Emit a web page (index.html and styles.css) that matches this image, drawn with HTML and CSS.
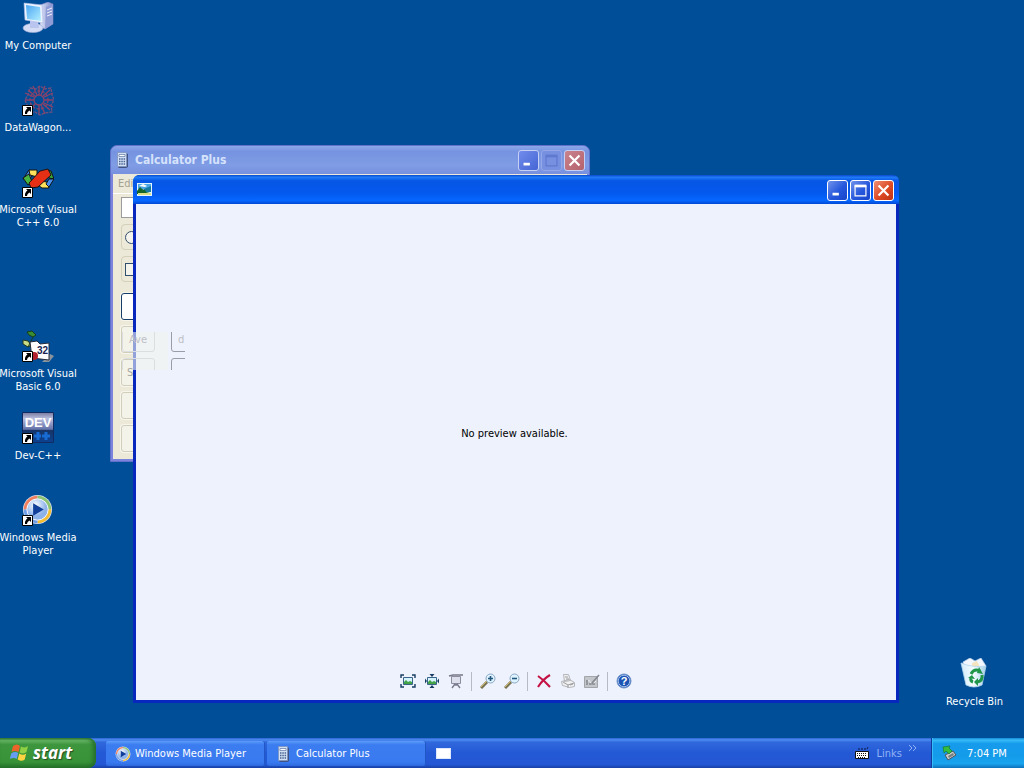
FILE: index.html
```html
<!DOCTYPE html>
<html lang="en">
<head>
<meta charset="utf-8">
<title>Desktop</title>
<link rel="stylesheet" href="styles.css">
</head>
<body>
<svg class="defs" aria-hidden="true">
  <defs>
    <linearGradient id="scr" x1="0" y1="0" x2="1" y2="1"><stop offset="0" stop-color="#4ba6f4"/><stop offset="1" stop-color="#b4f0ff"/></linearGradient>
    <linearGradient id="tower" x1="0" y1="0" x2="1" y2="0"><stop offset="0" stop-color="#dfe4fa"/><stop offset="1" stop-color="#7d8ac8"/></linearGradient>
    <linearGradient id="dev" x1="0" y1="0" x2="0" y2="1"><stop offset="0" stop-color="#77799f"/><stop offset=".2" stop-color="#b9bddd"/><stop offset=".56" stop-color="#6472aa"/><stop offset=".6" stop-color="#173567"/><stop offset="1" stop-color="#0b4292"/></linearGradient>
    <radialGradient id="disc" cx=".4" cy=".3"><stop offset="0" stop-color="#fff"/><stop offset="1" stop-color="#8db2ea"/></radialGradient>
    <linearGradient id="bin" x1="0" y1="0" x2="1" y2="0"><stop offset="0" stop-color="#d4ecfa"/><stop offset=".5" stop-color="#f4fbff"/><stop offset="1" stop-color="#a5cfe9"/></linearGradient>
    <symbol id="shortcut" viewBox="0 0 11 11"><path fill="#fff" stroke="#000" d="M.5.5h10v10H.5z"/><path d="M4 2h5v5L7.500 5.500Q5 6.500 5 9H3Q2.500 5.500 5.500 3.500z"/></symbol>
    <symbol id="calc" viewBox="0 0 16 16"><path fill="#40527f" d="M11 1l2 1v13l-2 1H4l-1-1z"/><path fill="#d3e1f6" stroke="#7f93bb" stroke-width=".8" d="M2.500.5h9v14h-9z"/><path fill="#fff" stroke="#5d75a4" stroke-width=".7" d="M4 2.500h6v2H4z"/><path stroke="#486391" stroke-width="1.400" stroke-dasharray="1.500 .8" d="M4 7h6.500M4 9.500h6.500M4 12h6.500"/></symbol>
    <symbol id="wmp" viewBox="0 0 32 32"><circle cx="16" cy="16" r="15" fill="#d9ddea"/><g fill="none" stroke-width="3.500"><path stroke="#f08060" d="M3.500 16A12.500 12.500 0 0 1 16 3.500"/><path stroke="#8bc572" d="M16 3.500A12.500 12.500 0 0 1 28.500 16"/><path stroke="#f4bd32" d="M28.500 16A12.500 12.500 0 0 1 16 28.500"/><path stroke="#709ee6" d="M16 28.500A12.500 12.500 0 0 1 3.500 16"/></g><circle cx="16" cy="16" r="11" fill="url(#disc)" stroke="#f7f9ff"/><path fill="#123f99" d="M11.500 9.500v13l11-6.500z"/></symbol>
    <symbol id="min" viewBox="0 0 21 21"><path fill="#fff" d="M5 13h7v3H5z"/></symbol>
    <symbol id="max" viewBox="0 0 21 21"><path fill="none" stroke="currentColor" stroke-width="1.300" d="M4.500 5.500h12v11h-12z"/><path fill="currentColor" d="M4 4h13v3H4z"/></symbol>
    <symbol id="close" viewBox="0 0 21 21"><path stroke="#fff" stroke-width="2.400" d="M5 5l11 11M16 5L5 16"/></symbol>
    <symbol id="photo" viewBox="0 0 10 8"><path fill="#d5f2ff" stroke="#3a6488" d="M.5.500h9v7h-9z"/><path fill="#45a347" d="M1 7V5l2-2 2 2 2-1 2 1v2z"/></symbol>
  </defs>
</svg>

<div class="screen">
  <main class="desktop">
    <nav class="icons" aria-label="Desktop shortcuts">
      <a class="shortcut" href="#computer">
        <svg viewBox="0 0 32 32"><path fill="url(#tower)" stroke="#7783c0" stroke-width=".6" d="M18 3l8-3 5 2v20l-8 5-5-2z"/><path fill="#8f9bd4" d="M24 5l7-3v20l-8 5z"/><path stroke="#eef1ff" d="M25 8l5-2M25 11l5-2M25 14l5-2"/><ellipse cx="11" cy="26" rx="10" ry="4.500" fill="#d4dcf5" stroke="#a1acd9" stroke-width=".6"/><path fill="#b9c5ee" d="M8 19h8l1 7H8z"/><path fill="#edf3ff" stroke="#aebbe4" stroke-width=".6" d="M2 1l18 2 1 18L3 18z"/><path fill="url(#scr)" d="M4 3l14 2 1 14-14-2z"/></svg>
        <span>My Computer</span></a>
      <a class="shortcut" href="#datawagon">
        <svg viewBox="0 0 32 32"><g fill="none" stroke="#8c4268" stroke-width="1.300"><circle cx="17" cy="16" r="5"/><circle cx="17" cy="16" r="9" stroke-dasharray="3 1.500"/><path stroke="#70507e" stroke-dasharray="3 1" d="M8 4l6 1 4-3 5 3 6-1 1 7 2 5-3 5 1 7-7 1-5 2-5-3-7 1-1-8-2-5 3-5z"/><path d="M17 2v9M17 21v9M3 16h9M22 16h9M6 6l7 6M28 6l-7 6M28 26l-7-6M7 27l6-7M3 9l9 4M31 9l-9 4M31 23l-9-4M11 2l4 9M23 2l-4 9M23 30l-4-9"/></g><use href="#shortcut" x="0" y="21" width="11" height="11"/></svg>
        <span>DataWagon...</span></a>
      <a class="shortcut" href="#vc">
        <svg viewBox="0 0 32 32"><g stroke="#151515"><path fill="#488bea" d="M7 4l6 2-6 8-6-1z"/><path fill="#ffe15b" d="M7 4h8v7l-7-2z"/><path fill="#49b541" d="M1 12l6-4 3 8-4 3z"/><path fill="#ffe15b" d="M18 15l7 1 2 6h-7l-4-3z"/><path fill="#39a63c" d="M24 4l5 1 3 8-5-1z"/><path fill="#478ded" d="M27 13h5l-5 8-3-3z"/><path fill="#e63015" d="M7 17L18 5l8-2 3 6-13 12-7 1z"/></g><use href="#shortcut" x="0" y="21" width="11" height="11"/></svg>
        <span>Microsoft Visual<br>C++ 6.0</span></a>
      <a class="shortcut after-gap" href="#vb">
        <svg viewBox="0 0 32 32"><path fill="#3b8b32" stroke="#123e1c" d="M5 2l5-1 4 4-3 2-4-2z"/><path fill="#c9db87" stroke="#253b20" d="M1 10l5 1 3 4-3 2-5-3z"/><path stroke="#13411b" d="M11 7l-5 10"/><path fill="#89949d" d="M28 24l4 2-5 6h-7z"/><path fill="#fff" stroke="#252b3a" d="M8 12l7-1 3 3 9-1v17l-17-2z"/><circle cx="12" cy="26" r="4" fill="#b2212d"/><text class="vb-mark" x="15" y="24">32</text><use href="#shortcut" x="0" y="21" width="11" height="11"/></svg>
        <span>Microsoft Visual<br>Basic 6.0</span></a>
      <a class="shortcut" href="#devcpp">
        <svg viewBox="0 0 32 32"><path fill="url(#dev)" stroke="#112b62" d="M.5.500h31v30H.5z"/><text class="dev-mark" x="16" y="15" text-anchor="middle">DEV</text><path stroke="#176bd3" stroke-width="3" d="M12 24h7M20 24h8M16 20v8M24 20v8"/><use href="#shortcut" x="0" y="21" width="11" height="11"/></svg>
        <span>Dev-C++</span></a>
      <a class="shortcut" href="#wmplayer">
        <svg viewBox="0 0 32 32"><use href="#wmp" width="31" height="31"/><use href="#shortcut" x="0" y="21" width="11" height="11"/></svg>
        <span>Windows Media<br>Player</span></a>
    </nav>

    <a class="shortcut recycle" href="#recycle">
      <svg viewBox="0 0 32 32"><path fill="#f2f7ff" stroke="#bfd2e8" stroke-width=".7" d="M5 4l7-4 5 3 6-3 5 8-6 5H7z"/><path fill="#f4e4bf" d="M14 5l5-2 3 6h-8z"/><path fill="url(#bin)" stroke="#b3d5ec" stroke-width=".8" d="M3 5q12 5 25 3l-4 19q-8 4-16 0z"/><g fill="none" stroke="#20964a" stroke-width="3"><path d="M13 16q3-6 9-3M24 17q1 6-5 7M15 24q-3-1-2-4"/></g><path fill="#20964a" d="M21 9l4 7-6-1zM20 20v8l-4-4zM10 20l4-3 3 4z"/></svg>
      <span>Recycle Bin</span></a>

    <section class="window calculator" aria-label="Calculator Plus">
      <header class="titlebar">
        <svg class="title-icon" viewBox="0 0 16 16"><use href="#calc"/></svg>
        <h1>Calculator Plus</h1>
        <div class="controls">
          <button class="ctl" aria-label="Minimize calculator"><svg viewBox="0 0 21 21"><use href="#min"/></svg></button>
          <button class="ctl unavailable" aria-label="Maximize calculator" disabled><svg viewBox="0 0 21 21"><use href="#max"/></svg></button>
          <button class="ctl red" aria-label="Close calculator"><svg viewBox="0 0 21 21"><use href="#close"/></svg></button>
        </div>
      </header>
      <div class="calc-body">
        <button class="menu-item">Edit</button>
        <div class="keypad">
          <input class="display" aria-label="Result">
          <label class="option"><input type="radio" aria-label="Hex"></label>
          <label class="option"><input type="checkbox" aria-label="Inv"></label>
          <button class="key pressed" aria-label="Blank key"></button>
          <button class="key" aria-label="Average"></button>
          <button class="key">Sum</button>
          <button class="key" aria-label="s"></button>
          <button class="key" aria-label="Dat"></button>
        </div>
      </div>
    </section>

    <section class="window viewer" aria-label="Picture viewer">
      <header class="titlebar">
        <svg class="title-icon" viewBox="0 0 16 16"><path fill="#e4f5ff" d="M0 1h15v13H0z"/><path fill="#4ba7e4" d="M1 2h13v5H1z"/><path fill="#fff" d="M2 4l4-2 4 2-2 1z"/><path fill="#167ba0" d="M7 7l7-3v6H7z"/><path fill="#13652b" d="M0 9l3-4 2 2 3 1 1 2 4 1v1H0z"/><path fill="#d8df86" d="M1 11h13v2H1z"/></svg>
        <div class="controls">
          <button class="ctl" aria-label="Minimize viewer"><svg viewBox="0 0 21 21"><use href="#min"/></svg></button>
          <button class="ctl" aria-label="Maximize viewer"><svg viewBox="0 0 21 21"><use href="#max"/></svg></button>
          <button class="ctl red" aria-label="Close viewer"><svg viewBox="0 0 21 21"><use href="#close"/></svg></button>
        </div>
      </header>
      <div class="viewer-body">
        <p class="message">No preview available.</p>
        <div class="toolbar" role="toolbar">
          <button class="tool" aria-label="Best fit"><svg viewBox="0 0 16 16"><use href="#photo" x="3" y="4" width="10" height="8"/><path fill="none" stroke="#173c60" stroke-width="1.400" d="M1 5V2h3M12 2h3v3M1 11v3h3M12 14h3v-3"/></svg></button>
          <button class="tool" aria-label="Actual size"><svg viewBox="0 0 16 16"><use href="#photo" x="3" y="4" width="10" height="8"/><path fill="#173c60" d="M8 4L5.500 1h5zM8 12l-2.500 3h5zM3 8L1 5.500v5zM13 8l2-2.500v5z"/></svg></button>
          <button class="tool" aria-label="Slide show"><svg viewBox="0 0 16 16"><path fill="#dedfed" stroke="#8b8c9d" d="M3.500 3.500h9v7h-9z"/><path fill="none" stroke="#777889" stroke-width="1.400" d="M1 3l4-1h10M8 11v2M7 11l-3 4M9 11l3 4"/></svg></button>
          <span class="separator"></span>
          <button class="tool" aria-label="Zoom in"><svg viewBox="0 0 16 16"><path stroke="#787352" stroke-width="3" d="M1 15l6-6"/><path stroke="#d1b76b" d="M1 14l6-6"/><circle cx="10.500" cy="5.500" r="4.500" fill="#ddf3ff" stroke="#8ba6c4"/><path stroke="#24577d" stroke-width="1.600" d="M8 5.500h5M10.500 3v5"/></svg></button>
          <button class="tool" aria-label="Zoom out"><svg viewBox="0 0 16 16"><path stroke="#787352" stroke-width="3" d="M1 15l6-6"/><path stroke="#d1b76b" d="M1 14l6-6"/><circle cx="10.500" cy="5.500" r="4.500" fill="#ddf3ff" stroke="#8ba6c4"/><path stroke="#24577d" stroke-width="1.600" d="M8 5.500h5"/></svg></button>
          <span class="separator"></span>
          <button class="tool" aria-label="Delete"><svg viewBox="0 0 16 16"><path fill="none" stroke="#c31243" stroke-width="2.100" d="M2 3q6 4 12 11M14 2Q7 6 2 14"/></svg></button>
          <button class="tool" aria-label="Print" disabled><svg viewBox="0 0 16 16"><path fill="#f0f0f1" stroke="#b4b6ba" d="M3.500 1.500h5l2 6-6 1zM1.500 8.500l8-2 5 3v4l-5 1-7-2z"/><path stroke="#9a9ca0" d="M3 9l5 3 6-2M8 12v3M5 4h3M6 6h3M10 12l3-1"/></svg></button>
          <button class="tool" aria-label="Edit picture" disabled><svg viewBox="0 0 16 16"><path fill="#c3c6ca" stroke="#a2a5aa" d="M.5 3.500h13v11H.5z"/><path fill="none" stroke="#e9eaed" d="M2 11l3-4 3 5 4-4"/><path stroke="#868a90" stroke-width="1.600" d="M8 10l7-8M3 7v5M5 11h6"/></svg></button>
          <span class="separator"></span>
          <button class="tool" aria-label="Help"><svg viewBox="0 0 16 16"><circle cx="8" cy="8" r="7" fill="#1d54b4" stroke="#6f93c9"/><circle cx="8" cy="8" r="5.800" fill="none" stroke="#c3d8f5" stroke-width=".8"/><text class="help-mark" x="8" y="12" text-anchor="middle">?</text></svg></button>
        </div>
      </div>
    </section>

    <div class="ghost" aria-hidden="true"><div class="ghost-band"></div><span class="ghost-key">Ave</span><span class="ghost-key right">d</span><span class="ghost-key lower"></span><span class="ghost-key right lower"></span></div>
  </main>

  <footer class="taskbar">
    <button class="start"><svg viewBox="0 0 20 20"><path fill="#ed642b" d="M3 3q4-3 7 0L8.500 9q-4-2-7 0z"/><path fill="#8fd044" d="M11 3.500q4 2 7-.5l-1.500 6q-3 2.500-7 .5z"/><path fill="#679cf3" d="M1.200 10.500q4-2.500 7-.5l-1.500 6q-3-2-7 0z"/><path fill="#ffd341" d="M9.200 10.500q4 2.500 7 0l-1.500 6q-3 2.500-7 0z"/></svg><span>start</span></button>
    <div class="tasks">
      <button class="task"><svg viewBox="0 0 32 32"><use href="#wmp"/></svg><span>Windows Media Player</span></button>
      <button class="task"><svg viewBox="0 0 16 16"><use href="#calc"/></svg><span>Calculator Plus</span></button>
    </div>
    <button class="deskband" aria-label="Show window"></button>
    <div class="links"><svg viewBox="0 0 14 14"><path fill="none" stroke="#091640" stroke-dasharray="2 1" d="M3 3h9l1-2"/><path fill="#fff" stroke="#111" d="M.5 5.500h13v7H.5z"/><path stroke="#111" stroke-dasharray="1 1" d="M2 7.500h10M2 9.500h10M3 11.500h8"/></svg><a href="#links">Links</a><button class="chevron" aria-label="More links"><svg viewBox="0 0 9 6"><path fill="none" stroke="currentColor" d="M1 0l3 3-3 3M5 0l3 3-3 3"/></svg></button></div>
    <div class="tray"><svg viewBox="0 0 16 16"><path fill="#c7ccc8" stroke="#4a5561" d="M3 10l8-4 3 4-8 5z"/><path fill="#777f84" d="M6 11l5-3 1 2-5 3z"/><path fill="#35bd3d" stroke="#187b2f" stroke-width=".7" d="M1 2l7-1-1 2 3 3-3 3-3-3-2 2z"/></svg><time datetime="19:04">7:04 PM</time></div>
  </footer>
</div>
</body>
</html>
```
FILE: styles.css
```css
* { box-sizing: border-box; }

body {
  margin: 0;
  font: 11px/13px "DejaVu Sans Condensed", "Noto Sans", sans-serif;
  color: #000;
}

button {
  margin: 0;
  padding: 0;
  border: 0;
  background: none;
  font: inherit;
  color: inherit;
}

a { color: inherit; text-decoration: none; }
svg { display: block; fill: none; flex: none; }
.defs { position: absolute; width: 0; height: 0; }

.screen { display: flex; flex-direction: column; height: 100vh; overflow: hidden; background: #004e98; }
.desktop { position: relative; flex: 1; min-height: 0; }

/* Desktop shortcuts */
.icons { display: flex; flex-direction: column; width: 76px; padding-top: 2px; }
.shortcut { display: flex; flex-direction: column; align-items: center; gap: 5px; height: 82px; color: #fff; text-align: center; white-space: nowrap; }
.shortcut > svg { width: 32px; height: 32px; fill: #000; }
.after-gap { margin-top: 82px; }
.recycle { position: absolute; right: 21px; bottom: 0; height: 80px; }
.vb-mark { font: bold 10px "Liberation Sans", sans-serif; fill: #17234f; }
.dev-mark { font: bold 13px "Liberation Sans", sans-serif; fill: #fff; }

/* Windows */
.window { position: absolute; display: flex; flex-direction: column; border-radius: 7px 7px 0 0; }
.titlebar { display: flex; align-items: center; height: 30px; flex: none; }
.title-icon { width: 16px; height: 16px; }
.titlebar h1 { margin: 0 0 0 4px; font: bold 12px/16px "DejaVu Sans Condensed", sans-serif; color: #d5e2fb; }
.controls { display: flex; gap: 2px; margin-left: auto; }
.ctl { width: 21px; height: 21px; border: 1px solid #fff; border-radius: 3px; background: linear-gradient(135deg, #7293eb, #2557dc 55%, #1744ca); color: #fff; }
.ctl svg { width: 19px; height: 19px; }
.ctl.red { background: linear-gradient(135deg, #ed8e72, #dd4a25 55%, #be3212); }

.calculator { left: 110px; top: 145px; width: 480px; height: 317px; padding: 0 2px 2px; background: #7c83dc; border: 1px solid #6171c9; }
.calculator .titlebar { height: 28px; margin: 0 -2px; padding: 0 4px; border-radius: 6px 6px 0 0; background: linear-gradient(#8ca7e9, #7693e1 20%, #7f9ce4 70%, #7890df); }
.calculator .ctl { border-color: #c5d0f4; background: linear-gradient(135deg, #718ceb, #4465d4); }
.calculator .ctl.red { background: linear-gradient(135deg, #c9838c, #b5626d); }
.calculator .ctl.unavailable { border-color: #95a7e8; background: #7790df; color: #6079d0; }
.calc-body { flex: 1; min-height: 0; background: #ece9d8; }
.menu-item { display: block; height: 19px; padding-left: 5px; color: #a5a292; }
.keypad { display: flex; flex-direction: column; width: 42px; padding: 3px 0 0 8px; border-top: 1px solid #fff; gap: 6px; }
.display { width: 100%; height: 21px; border: 1px solid #9b9c9b; background: #fff; }
.option { display: flex; align-items: center; height: 26px; padding-left: 3px; border: 1px solid #d4d0ba; border-radius: 4px; }
.option input { appearance: none; width: 13px; height: 13px; margin: 0; border: 1px solid #324e6e; background: #f5f4ec; }
.option input[type="radio"] { border-radius: 50%; }
.key { height: 27px; flex: none; border: 1px solid #d0cdba; border-radius: 3px; background: #f4f3e9; color: #a4a69e; box-shadow: 0 0 0 1px #f7f6ed; }
.key.pressed { margin-top: 5px; border-color: #163c69; background: #fff; }

.viewer { left: 133px; top: 175px; width: 766px; height: 528px; padding: 0 3px 3px; background: #0727bd; }
.viewer .titlebar { height: 29px; margin: 0 -3px; padding: 1px 5px 0 4px; border-radius: 6px 6px 0 0; background: linear-gradient(#0849cf, #207bf7 8%, #0657e5 20%, #0458ed 60%, #0567ff 88%, #0349d5); }
.viewer-body { display: flex; flex-direction: column; flex: 1; background: #eef2fc; }
.message { display: flex; flex: 1; align-items: center; justify-content: center; margin: 0; padding-right: 3px; }
.toolbar { display: flex; align-items: center; justify-content: center; gap: 8px; height: 38px; }
.tool { width: 16px; height: 16px; }
.tool svg { width: 16px; height: 16px; }
.separator { width: 1px; height: 19px; margin-left: -1px; background: #b6bac4; }
.help-mark { font: bold 11px "Liberation Sans", sans-serif; fill: #fff; }

/* Unpainted trail of the calculator keys above the viewer */
.ghost { position: absolute; left: 122px; top: 332px; width: 63px; height: 38px; overflow: hidden; }
.ghost-band { width: 35px; height: 38px; margin-left: 11px; background: #f1f4ee; opacity: .6; }
.ghost-key { position: absolute; left: 0; top: -7px; width: 33px; height: 27px; border: 1px solid #dcdde1; border-radius: 3px; padding: 7px 0 0 6px; color: #bdbfc6; }
.ghost-key.right { left: 49px; border-color: #9a9ca9; }
.ghost-key.lower { top: 26px; }

/* Taskbar */
.taskbar { display: flex; height: 30px; flex: none; background: linear-gradient(#2b62d1, #4c8cf3 6%, #3068dd 14%, #2459d5 50%, #2357d5 88%, #1941a5); color: #fff; }
.start { display: flex; align-items: center; width: 96px; padding-left: 10px; gap: 3px; border-radius: 0 8px 8px 0; background: linear-gradient(#347c34, #67b567 8%, #3d963d 22%, #389338 80%, #24702a); box-shadow: inset -3px 0 4px #256f2b; font: italic bold 17px/20px "Open Sans", sans-serif; text-shadow: 1px 1px 1px #234d23; }
.start svg { width: 20px; height: 20px; }
.tasks { display: flex; gap: 2px; padding: 3px 0 2px 10px; }
.task { display: flex; align-items: center; gap: 4px; width: 159px; padding-left: 9px; border-radius: 2px; background: linear-gradient(#5c9dfa, #3b7cf0 15%, #397af0 85%, #2d68dc); box-shadow: inset -1px 0 #2057c5; text-align: left; }
.task svg { width: 16px; height: 16px; }
.deskband { align-self: center; width: 15px; height: 11px; margin-left: 10px; background: #fff; border: 1px solid #dbe8fd; }
.links { display: flex; align-items: center; margin-left: auto; color: #90b3f6; }
.links > svg { width: 14px; height: 14px; margin-right: 8px; }
.chevron { align-self: flex-start; margin: 7px 14px 0 6px; }
.chevron svg { width: 9px; height: 6px; }
.tray { display: flex; align-items: center; gap: 9px; width: 93px; padding-left: 10px; border-left: 1px solid #113a9d; background: linear-gradient(#1685d8, #37bdf7 7%, #179bec 18%, #139bea 60%, #19a4ee 85%, #0d72bd); box-shadow: inset 1px 0 #37bdf7; }
.tray svg { width: 16px; height: 16px; }
```
